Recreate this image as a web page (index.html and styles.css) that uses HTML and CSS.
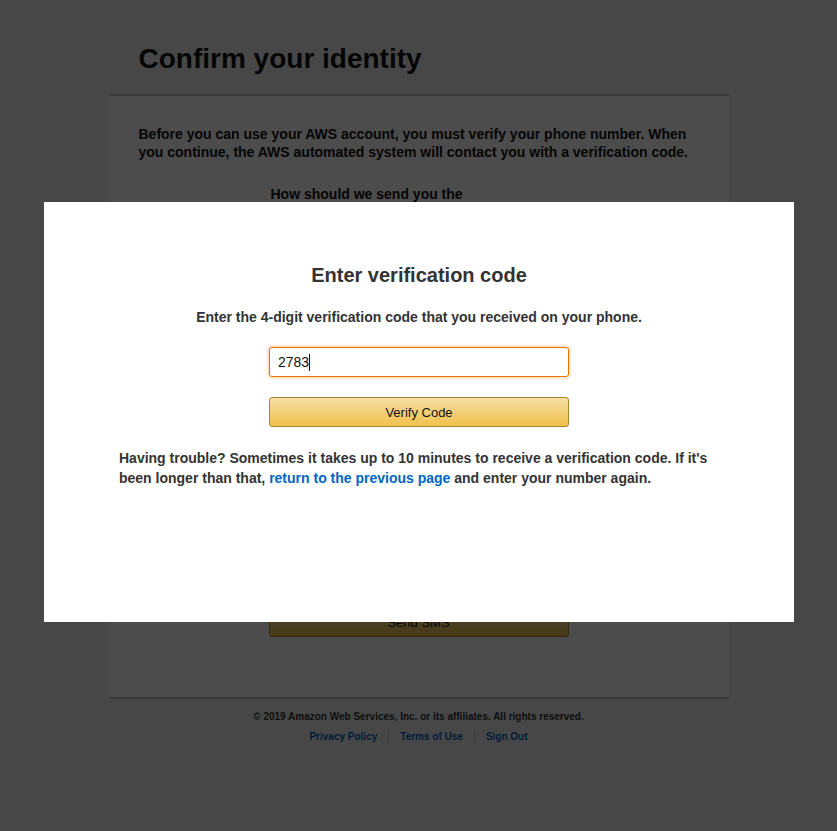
FILE: index.html
```html
<!DOCTYPE html>
<html lang="en">
<head>
<meta charset="utf-8">
<title>Confirm your identity</title>
<link rel="stylesheet" href="styles.css">
</head>
<body>
<div class="page">
  <div class="header">
    <h1 class="page-title">Confirm your identity</h1>
  </div>
  <div class="panel">
    <p class="intro">Before you can use your AWS account, you must verify your phone number. When you continue, the AWS automated system will contact you with a verification code.</p>
    <div class="form-col">
      <p class="question">How should we send you the verification code?</p>
      <div class="hidden-fields"></div>
      <button class="gold-btn send-btn" type="button">Send SMS</button>
    </div>
  </div>
  <div class="footer">
    <p class="copyright">© 2019 Amazon Web Services, Inc. or its affiliates. All rights reserved.</p>
    <div class="footer-links">
      <a href="#">Privacy Policy</a>
      <a href="#">Terms of Use</a>
      <a href="#">Sign Out</a>
    </div>
  </div>
</div>

<div class="overlay"></div>

<div class="modal">
  <h2 class="modal-title">Enter verification code</h2>
  <p class="modal-sub">Enter the 4-digit verification code that you received on your phone.</p>
  <div class="code-input">2783<span class="caret"></span></div>
  <button class="gold-btn verify-btn" type="button">Verify Code</button>
  <p class="trouble">Having trouble? Sometimes it takes up to 10 minutes to receive a verification code. If it's been longer than that, <a href="#">return to the previous page</a> and enter your number again.</p>
</div>
</body>
</html>
```

FILE: styles.css
```css
html, body {
  margin: 0;
  padding: 0;
}
body {
  background: #eeefef;
  font-family: "Liberation Sans", Arial, sans-serif;
  color: #111;
  min-height: 831px;
}
.page {
  width: 620px;
  margin: 0 auto;
}
.header {
  padding: 43px 30px 19px;
}
.page-title {
  margin: 0;
  font-size: 28px;
  line-height: 32px;
  font-weight: 700;
  color: #111;
}
.panel {
  background: #ffffff;
  border-top: 2px solid #c4c4c4;
  border-bottom: 2px solid #c4c4c4;
  padding: 29px 30px 60px;
}
.intro {
  margin: 0;
  font-size: 14px;
  line-height: 18px;
  font-weight: 700;
  color: #111;
}
.form-col {
  width: 300px;
  margin: 24px auto 0;
}
.question {
  margin: 0;
  padding: 0 2px;
  max-width: 225px;
  font-size: 14px;
  line-height: 18px;
  font-weight: 700;
  color: #111;
}
.hidden-fields {
  height: 386px;
}
.gold-btn {
  display: block;
  width: 300px;
  height: 30px;
  box-sizing: border-box;
  border: 1px solid #a88734;
  border-radius: 3px;
  background: linear-gradient(to bottom, #f7dfa5, #f0c14b);
  font-family: "Liberation Sans", Arial, sans-serif;
  font-size: 13px;
  color: #111;
  padding: 0;
  cursor: pointer;
}
.footer {
  padding-top: 11px;
  text-align: center;
}
.copyright {
  margin: 0;
  font-size: 10px;
  line-height: 14px;
  font-weight: 700;
  color: #333;
}
.footer-links {
  margin-top: 6px;
  display: flex;
  justify-content: center;
}
.footer-links a {
  font-size: 10px;
  line-height: 14px;
  font-weight: 700;
  color: #0066c0;
  text-decoration: none;
  padding: 0 11px;
  border-left: 1px solid #ccc;
}
.footer-links a:first-child {
  border-left: none;
}
.overlay {
  position: fixed;
  inset: 0;
  background: rgba(0, 0, 0, 0.7);
}
.modal {
  position: fixed;
  left: 44px;
  top: 202px;
  width: 750px;
  height: 420px;
  box-sizing: border-box;
  background: #fff;
  padding: 61px 75px 0;
}
.modal-title {
  margin: 0;
  text-align: center;
  font-size: 20px;
  line-height: 24px;
  font-weight: 700;
  color: #333;
}
.modal-sub {
  margin: 21px 0 0;
  text-align: center;
  font-size: 14px;
  line-height: 18px;
  font-weight: 700;
  color: #333;
}
.code-input {
  width: 300px;
  height: 30px;
  box-sizing: border-box;
  margin: 21px auto 0;
  border: 1px solid #e77600;
  border-radius: 3px;
  box-shadow: 0 0 3px 1px rgba(228, 121, 17, 0.4);
  padding: 0 8px;
  font-size: 14px;
  line-height: 28px;
  color: #111;
  display: flex;
  align-items: center;
}
.caret {
  display: inline-block;
  width: 1px;
  height: 17px;
  background: #111;
}
.verify-btn {
  margin: 20px auto 0;
}
.trouble {
  margin: 21px 0 0;
  font-size: 14px;
  line-height: 20px;
  font-weight: 700;
  color: #333;
}
.trouble a {
  color: #0066c0;
  text-decoration: none;
}
```
